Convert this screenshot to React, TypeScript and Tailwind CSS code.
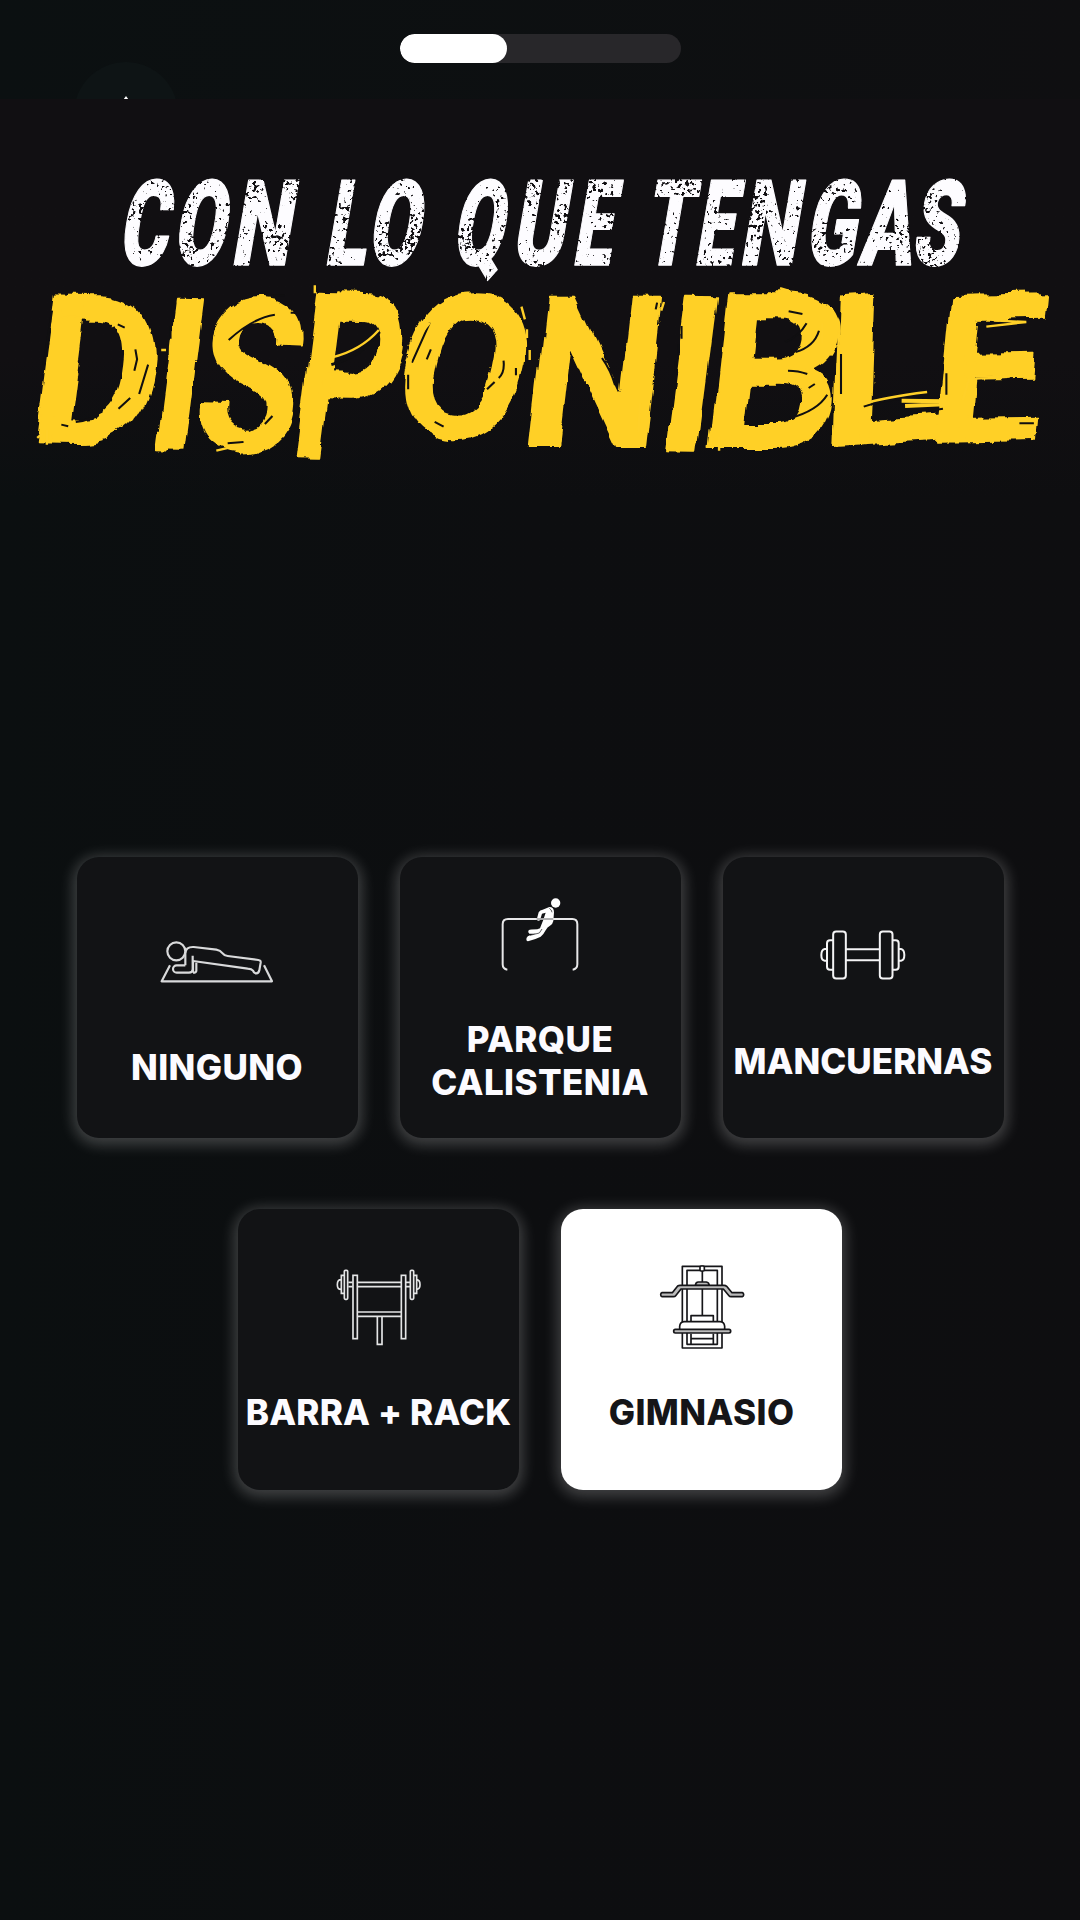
import type { ReactNode } from "react";
import clsx from "clsx";

type Glyph = {
  ch: string;
  x: number;
  len: number;
  y?: number;
  size?: number;
  rotate?: number;
};

type Option = {
  id: string;
  label: string;
  icon: ReactNode;
  pad: string;
  text: string;
};

const TOP_LINE: Glyph[] = [
  { ch: "C", x: 117, len: 48.9 },
  { ch: "O", x: 171.5, len: 51.7 },
  { ch: "N", x: 229.5, len: 59.5 },
  { ch: " ", x: 290, len: 30 },
  { ch: "L", x: 323, len: 41.8 },
  { ch: "O", x: 366, len: 51.7 },
  { ch: " ", x: 420, len: 30 },
  { ch: "Q", x: 450.5, len: 50.6 },
  { ch: "U", x: 510, len: 53 },
  { ch: "E", x: 571, len: 39 },
  { ch: " ", x: 612, len: 20 },
  { ch: "T", x: 642, len: 46.5 },
  { ch: "E", x: 693, len: 39 },
  { ch: "N", x: 738, len: 57.8 },
  { ch: "G", x: 803.5, len: 50.8 },
  { ch: "A", x: 857.6, len: 53 },
  { ch: "S", x: 910, len: 47.2 },
];

const BRUSH_LINE: Glyph[] = [
  { ch: "D", x: 22, len: 126, y: 439, size: 205, rotate: 1 },
  { ch: "I", x: 140, len: 55, y: 449, size: 216, rotate: 1 },
  { ch: "S", x: 186, len: 104, y: 446, size: 213, rotate: 2 },
  { ch: "P", x: 284, len: 110, y: 453, size: 227, rotate: 1 },
  { ch: "O", x: 379, len: 131, y: 425, size: 200, rotate: 8 },
  { ch: "N", x: 514, len: 142, y: 444, size: 210 },
  { ch: "I", x: 651, len: 55, y: 449, size: 216, rotate: 1 },
  { ch: "B", x: 693, len: 142, y: 447, size: 219 },
  { ch: "L", x: 817, len: 126, y: 445, size: 210, rotate: -4 },
  { ch: "E", x: 922, len: 113, y: 440, size: 205, rotate: -1 },
];

function Title() {
  return (
    <h1 className="flex flex-col">
      <svg className="block h-[105px] w-[1080px] overflow-visible" viewBox="0 170 1080 105">
        <defs>
          <filter id="grunge" x="-0.02" y="-0.2" width="1.04" height="1.4" colorInterpolationFilters="sRGB">
            <feTurbulence type="fractalNoise" baseFrequency="0.28" numOctaves="2" seed="4" result="fine" />
            <feTurbulence type="fractalNoise" baseFrequency="0.035" numOctaves="1" seed="9" result="coarse" />
            <feComposite in="fine" in2="coarse" operator="arithmetic" k2="0.65" k3="0.35" />
            <feColorMatrix values="0 0 0 0 0  0 0 0 0 0  0 0 0 0 0  0 0 0 22 -13" result="specks" />
            <feComposite in="SourceGraphic" in2="specks" operator="out" />
          </filter>
        </defs>
        <g filter="url(#grunge)">
          <g transform="translate(0 264.5) skewX(-9.7)">
            <text
              className="font-['Roboto',sans-serif] text-[119px] font-black"
              fill="#fdfcff"
              stroke="#fdfcff"
              strokeWidth="1.500"
              strokeLinejoin="round"
              xmlSpace="preserve"
            >
              {TOP_LINE.map(({ ch, x, len }) => (
                <tspan key={x} x={x} y={0} textLength={len} lengthAdjust="spacingAndGlyphs">
                  {ch}
                </tspan>
              ))}
            </text>
          </g>
        </g>
      </svg>
      <svg className="block h-[195px] w-[1080px] overflow-visible" viewBox="0 275 1080 195">
        <defs>
          <filter id="brush" x="-0.02" y="-0.05" width="1.04" height="1.1">
            <feTurbulence type="fractalNoise" baseFrequency="0.03 0.014" numOctaves="1" seed="12" />
            <feDisplacementMap in="SourceGraphic" scale="16" xChannelSelector="R" yChannelSelector="G" result="bent" />
            <feTurbulence type="fractalNoise" baseFrequency="0.14 0.04" numOctaves="1" seed="3" />
            <feDisplacementMap in="bent" scale="5" xChannelSelector="R" yChannelSelector="G" />
            <feOffset dx="3" dy="2" />
          </filter>
        </defs>
        <g filter="url(#brush)">
          <g transform="translate(0 443) skewX(-6.5) translate(0 -443)">
            <text
              className="font-['Roboto',sans-serif] font-bold"
              fill="#ffd028"
              stroke="#ffd028"
              strokeWidth="2"
              strokeLinejoin="round"
            >
              {BRUSH_LINE.map(({ ch, x, len, y, size, rotate }) => (
                <tspan
                  key={x}
                  x={x}
                  y={y}
                  rotate={rotate ?? 0}
                  fontSize={size}
                  textLength={len}
                  lengthAdjust="spacingAndGlyphs"
                >
                  {ch}
                </tspan>
              ))}
            </text>
          </g>
        </g>
        <BristleMarks />
      </svg>
    </h1>
  );
}

// Dry-brush gaps and loose bristles over the yellow word
function BristleMarks() {
  return (
    <>
      <g transform="translate(20 270) scale(0.3444 0.3333)" stroke="#100f11" strokeWidth="6" fill="none">
        <path d="M93 122L68 285M284 163l20 10M335 238l5 30-8 34M372 284l-26 88M320 384l-34 32M162 456q22-2 46-12M120 464l20 5M437 168v38M429 222v34M420 274v32" />
        <path d="M606 210q70-66 134-76M730 76h38M603 520l46-4M664 483l24-10M711 462l22-24M786 128h16" />
        <path d="M904 284q88-24 140-98" strokeWidth="9" />
        <path d="M1193 238l-12 30M1127 314v44M1190 158l-52 120M1404 272q4 36-14 52M1356 358l22-22M1204 456l26 14M1440 294v22" />
      </g>
      <g transform="translate(20 270) scale(0.3444 0.3333)" stroke="#ffd028" strokeWidth="7" fill="none">
        <path d="M50 504l16-14M78 480v44M856 46v24M925 64v20M1240 98q16-12 40-14M1190 158q-52 60-58 128M1472 178v26M1480 240v30M1456 110l10 38M570 542l90-22M410 240h14" />
        <path d="M906 262q82-20 136-82" />
      </g>
      <g transform="translate(540 270) scale(0.3444 0.3333)" stroke="#100f11" strokeWidth="6" fill="none">
        <path d="M180 264q26 38 38 82M340 98l-4 20M411 168v38M403 222v34M394 274v32M722 124l40 8M712 216q40-16 62-56M742 246q54-16 68-64M720 302q30 0 56 10M780 354l18-12" />
        <path d="M726 444q80-22 108-70M940 410q40-16 110-24M874 252v120M1120 424l50-8M1180 310v64M1392 460h42M1264 320h50" />
      </g>
      <g transform="translate(540 270) scale(0.3444 0.3333)" stroke="#ffd028" strokeWidth="7" fill="none">
        <path d="M290 400l-4 86M360 96l-8 26M820 160v60M868 190l-8 190M960 90l-3 50M938 402q60-20 186-36M1296 146l30 6 86 4-116 14M1254 318l110 2-98 6M1246 326l-18 64M697 54l24 8M520 500v42M498 500v28" />
        <path d="M1050 392l130 2M1060 408l130-6" strokeWidth="12" />
      </g>
    </>
  );
}

function PlankIcon() {
  return (
    <svg className="h-[90px] w-[120px]" viewBox="290 228 360 270" fill="none" stroke="#d9dadb" strokeWidth="6.500" strokeLinejoin="round">
      <circle cx="348" cy="334" r="27" />
      <path d="M329 376L304 424H635L611 376" />
      <path d="M375 376V340Q376 320 400 321L468 329Q480 331 487 340Q492 347 502 348L594 360Q602 361 601 368L597 391Q595 401 586 400Q580 399 578 392Q574 387 562 386L398 363" />
      <path d="M375 376H349A11 11 0 0 0 349 398H386Q397 398 397 388V347M398 366V398M408 368V392Q408 398 398 398" />
    </svg>
  );
}

function BarIcon() {
  return (
    <svg className="h-[90px] w-[120px]" viewBox="300 146 360 270" fill="none">
      <path
        d="M382 388Q368 386 368 372V252Q368 236 384 236H577Q592 236 592 252V372Q592 386 578 388"
        stroke="#e8e8e9"
        strokeWidth="6"
      />
      <circle cx="527" cy="188" r="14" fill="#fff" />
      <path
        d="M508 200Q522 200 522 216L520 242Q518 252 510 256Q502 260 497 270Q490 284 482 289Q464 298 444 303Q437 301 440 292Q442 287 450 285L468 280H448Q442 276 446 270Q450 267 472 267L480 264L490 238Q494 226 497 217L486 220L480 240Q474 243 470 238L476 216Q480 209 488 208Z"
        fill="#fff"
      />
      <path d="M450 285L478 278L486 266M508 204Q515 208 516 216M470 236H520" stroke="#131416" strokeWidth="2" />
    </svg>
  );
}

function DumbbellIcon() {
  return (
    <svg className="h-[90px] w-[120px]" viewBox="281 210 360 270" fill="none" stroke="#f4f4f5" strokeWidth="6">
      <rect x="371.500" y="274.500" width="38" height="141" rx="9" />
      <rect x="511.500" y="274.500" width="38" height="141" rx="9" />
      <path d="M410 328H511M410 361H511" />
      <path d="M371 301H362Q353 301 353 310V380Q353 389 362 389H371M550 301H559Q568 301 568 310V380Q568 389 559 389H550" />
      <path d="M353 327H346Q336 329 336 345Q336 361 346 362H353M568 327H575Q585 329 585 345Q585 361 575 362H568" />
    </svg>
  );
}

function RackIcon() {
  return (
    <svg className="h-[90px] w-[120px]" viewBox="295 215 360 270" fill="none" stroke="#e4e5e6" strokeWidth="5">
      <rect x="397" y="255" width="13" height="190" />
      <rect x="542" y="255" width="13" height="190" />
      <path d="M412 276H541M412 289H541M412 365H541M412 378H541M470 380V462H484V380" />
      <path d="M383 276H396M383 289H396M556 276H568M556 289H568" />
      <rect x="371" y="240" width="10" height="87" rx="3" />
      <rect x="569" y="240" width="10" height="87" rx="3" />
      <path d="M370 255H362V309H370M361 268Q350 268 350 283Q350 297 361 297M580 255H588V309H580M589 268Q598 270 598 283Q598 295 589 297" />
    </svg>
  );
}

function MachineIcon() {
  return (
    <svg className="h-[90px] w-[120px]" viewBox="305 215 360 270" fill="none" stroke="#151518" strokeWidth="5" strokeLinejoin="round">
      <rect x="426" y="228" width="119" height="245" />
      <rect x="440" y="240" width="91" height="222" />
      <path d="M486 240V375" />
      <rect x="479" y="227" width="13" height="15" rx="4" fill="#fff" />
      <path d="M465 286Q466 275 474 275H498Q506 276 507 286Z" fill="#bbb" />
      <path
        d="M365 307H396L412 287Q415 285 419 285H551Q556 285 559 288L575 307H606Q610 308 610 313Q610 318 606 319H572Q568 319 566 316L549 296H422L406 316Q404 319 399 319H365Q361 318 361 313Q361 308 365 307Z"
        fill="#bbb"
      />
      <path d="M452 392V376H519V392M452 430V462M519 430V462M452 445H519" />
      <path d="M418 417V408Q419 395 432 394H539Q552 395 553 408V417" fill="#fff" />
      <rect x="400" y="417" width="171" height="11" rx="5" fill="#bbb" />
    </svg>
  );
}

const OPTIONS: Option[] = [
  {
    id: "none",
    label: "NINGUNO",
    icon: <PlankIcon />,
    pad: "pt-[59px] gap-10",
    text: "tracking-[0.4px]",
  },
  {
    id: "park",
    label: "PARQUE CALISTENIA",
    icon: <BarIcon />,
    pad: "pt-8 gap-[39px]",
    text: "w-60 tracking-[0.4px]",
  },
  {
    id: "dumbbells",
    label: "MANCUERNAS",
    icon: <DumbbellIcon />,
    pad: "pt-[53px] gap-10",
    text: "whitespace-nowrap",
  },
  {
    id: "rack",
    label: "BARRA + RACK",
    icon: <RackIcon />,
    pad: "pt-[53px] gap-[39px]",
    text: "whitespace-nowrap tracking-[0.2px]",
  },
  {
    id: "gym",
    label: "GIMNASIO",
    icon: <MachineIcon />,
    pad: "pt-[53px] gap-[39px]",
    text: "tracking-[0.4px]",
  },
];

const SELECTED = "gym";

function OptionCard({ option }: { option: Option }) {
  const active = option.id === SELECTED;
  return (
    <button
      aria-pressed={active}
      className={clsx(
        "flex h-[281px] w-[281px] flex-col items-center rounded-[22px] shadow-[0_3px_14px_4px_rgba(255,255,255,0.21)]",
        option.pad,
        active ? "bg-white text-[#151518]" : "bg-[#121315] text-[#fcfbff]",
      )}
    >
      {option.icon}
      <span className={clsx("text-center text-[35px] leading-[43px] font-extrabold", option.text)}>
        {option.label}
      </span>
    </button>
  );
}

export default function App() {
  return (
    <div className="flex h-[1920px] w-[1080px] flex-col overflow-hidden bg-linear-to-r from-[#0b0f10] via-[#0d0e10] to-[#0e0e10] font-['Inter',sans-serif]">
      <header className="flex h-[99px] overflow-hidden bg-linear-to-r from-[#0b1011] to-[#0f0f11]">
        <div className="flex w-[400px] pt-[62px] pl-[74px]">
          <button
            aria-label="Volver"
            className="flex size-[104px] shrink-0 justify-center rounded-full bg-[#0e1415] pt-[34px]"
          >
            <svg className="h-9 w-10" viewBox="0 0 40 36" fill="#fff">
              <path d="M20 0L40 28V36H0V28Z" />
            </svg>
          </button>
        </div>
        <div className="mt-[34px] h-[29px] w-[281px] overflow-hidden rounded-full bg-[#28272a]">
          <div className="h-full w-[107px] rounded-full bg-white" />
        </div>
      </header>
      <section className="h-[400px] bg-linear-to-b from-[#110f12] from-65% to-transparent pt-[71px]">
        <Title />
      </section>
      <main className="mt-[358px] flex flex-wrap justify-center gap-x-[42px] gap-y-[71px]">
        {OPTIONS.map((option) => (
          <OptionCard key={option.id} option={option} />
        ))}
      </main>
    </div>
  );
}
